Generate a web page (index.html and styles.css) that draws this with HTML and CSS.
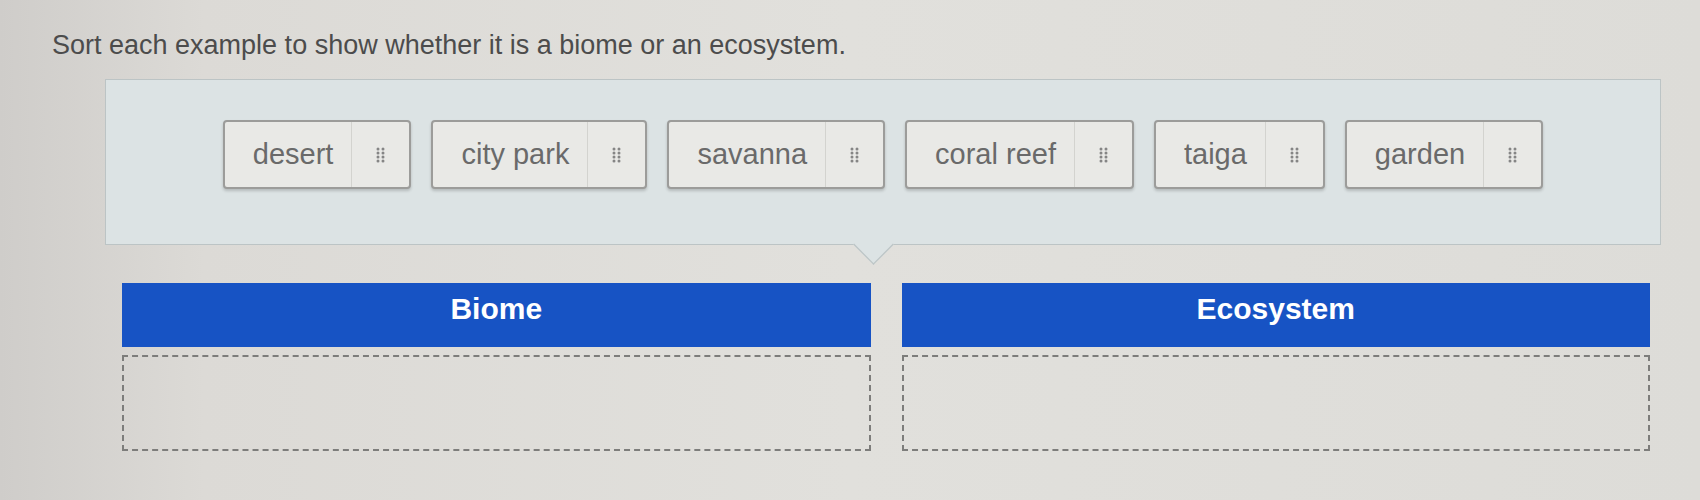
FILE: index.html
```html
<html>
    <head>
        <title>Biome or Ecosystem</title>
        <meta name="viewport" content="width=device-width, initial-scale=1.0">
        <link rel="stylesheet" href="styles.css">
    </head>
    <body>
        <p class="prompt">Sort each example to show whether it is a biome or an ecosystem.</p>

        <section class="bank">
            <div class="chip"><span class="label">desert</span><span class="grip"><svg width="9" height="16" viewBox="0 0 9 16"><g fill="#858585"><circle cx="2" cy="2" r="1.5"/><circle cx="7" cy="2" r="1.5"/><circle cx="2" cy="6" r="1.5"/><circle cx="7" cy="6" r="1.5"/><circle cx="2" cy="10" r="1.5"/><circle cx="7" cy="10" r="1.5"/><circle cx="2" cy="14" r="1.5"/><circle cx="7" cy="14" r="1.5"/></g></svg></span></div>
            <div class="chip"><span class="label">city park</span><span class="grip"><svg width="9" height="16" viewBox="0 0 9 16"><g fill="#858585"><circle cx="2" cy="2" r="1.5"/><circle cx="7" cy="2" r="1.5"/><circle cx="2" cy="6" r="1.5"/><circle cx="7" cy="6" r="1.5"/><circle cx="2" cy="10" r="1.5"/><circle cx="7" cy="10" r="1.5"/><circle cx="2" cy="14" r="1.5"/><circle cx="7" cy="14" r="1.5"/></g></svg></span></div>
            <div class="chip"><span class="label">savanna</span><span class="grip"><svg width="9" height="16" viewBox="0 0 9 16"><g fill="#858585"><circle cx="2" cy="2" r="1.5"/><circle cx="7" cy="2" r="1.5"/><circle cx="2" cy="6" r="1.5"/><circle cx="7" cy="6" r="1.5"/><circle cx="2" cy="10" r="1.5"/><circle cx="7" cy="10" r="1.5"/><circle cx="2" cy="14" r="1.5"/><circle cx="7" cy="14" r="1.5"/></g></svg></span></div>
            <div class="chip"><span class="label">coral reef</span><span class="grip"><svg width="9" height="16" viewBox="0 0 9 16"><g fill="#858585"><circle cx="2" cy="2" r="1.5"/><circle cx="7" cy="2" r="1.5"/><circle cx="2" cy="6" r="1.5"/><circle cx="7" cy="6" r="1.5"/><circle cx="2" cy="10" r="1.5"/><circle cx="7" cy="10" r="1.5"/><circle cx="2" cy="14" r="1.5"/><circle cx="7" cy="14" r="1.5"/></g></svg></span></div>
            <div class="chip"><span class="label">taiga</span><span class="grip"><svg width="9" height="16" viewBox="0 0 9 16"><g fill="#858585"><circle cx="2" cy="2" r="1.5"/><circle cx="7" cy="2" r="1.5"/><circle cx="2" cy="6" r="1.5"/><circle cx="7" cy="6" r="1.5"/><circle cx="2" cy="10" r="1.5"/><circle cx="7" cy="10" r="1.5"/><circle cx="2" cy="14" r="1.5"/><circle cx="7" cy="14" r="1.5"/></g></svg></span></div>
            <div class="chip"><span class="label">garden</span><span class="grip"><svg width="9" height="16" viewBox="0 0 9 16"><g fill="#858585"><circle cx="2" cy="2" r="1.5"/><circle cx="7" cy="2" r="1.5"/><circle cx="2" cy="6" r="1.5"/><circle cx="7" cy="6" r="1.5"/><circle cx="2" cy="10" r="1.5"/><circle cx="7" cy="10" r="1.5"/><circle cx="2" cy="14" r="1.5"/><circle cx="7" cy="14" r="1.5"/></g></svg></span></div>
        </section>

        <section class="categories">
            <div class="category">
                <h2 class="heading">Biome</h2>
                <div class="dropzone"></div>
            </div>
            <div class="category">
                <h2 class="heading">Ecosystem</h2>
                <div class="dropzone"></div>
            </div>
        </section>
    </body>
</html>
```

FILE: styles.css
```css
body {
    margin: 0;
    font-family: "Liberation Sans", Arial, sans-serif;
    background: linear-gradient(90deg, #cfcdca 0%, #dcdad6 12%, #e1e0dc 50%, #dddcd8 100%);
    min-height: 500px;
}

.prompt {
    margin: 0;
    padding: 29px 0 0 52px;
    font-size: 27px;
    line-height: 32px;
    color: #4c4c4c;
}

/* Word bank with the pointer under it */
.bank {
    position: relative;
    margin: 18px 39px 0 105px;
    padding: 40px 0 55px 0;
    background-color: #dce3e4;
    border: 1px solid #bcc4c5;
    display: flex;
    justify-content: center;
    gap: 20px;
}

.bank::after {
    content: "";
    position: absolute;
    left: 756px;
    bottom: -12px;
    width: 22px;
    height: 22px;
    background-color: #dce3e4;
    border-right: 1px solid #bcc4c5;
    border-bottom: 1px solid #bcc4c5;
    transform: rotate(45deg) scaleX(1.25) scaleY(1.25);
}

.chip {
    height: 65px;
    display: flex;
    align-items: stretch;
    background-color: #e9e9e6;
    border: 2px solid #9c9c9a;
    border-radius: 4px;
    box-shadow: 0 2px 3px rgba(0, 0, 0, 0.18);
}

.label {
    display: flex;
    align-items: center;
    padding: 0 18px 0 28px;
    font-size: 29px;
    color: #6a6a6a;
}

.grip {
    width: 57px;
    display: flex;
    align-items: center;
    justify-content: center;
    border-left: 1px solid #d3d3cf;
}

.categories {
    margin: 38px 50px 0 122px;
    display: grid;
    grid-template-columns: 1fr 1fr;
    gap: 31px;
}

.heading {
    margin: 0;
    height: 64px;
    padding-top: 10px;
    box-sizing: border-box;
    background-color: #1753c4;
    color: white;
    font-size: 30px;
    line-height: 32px;
    text-align: center;
}

.dropzone {
    margin-top: 8px;
    height: 96px;
    box-sizing: border-box;
    border: 2px dashed #7d7d7b;
}
```
